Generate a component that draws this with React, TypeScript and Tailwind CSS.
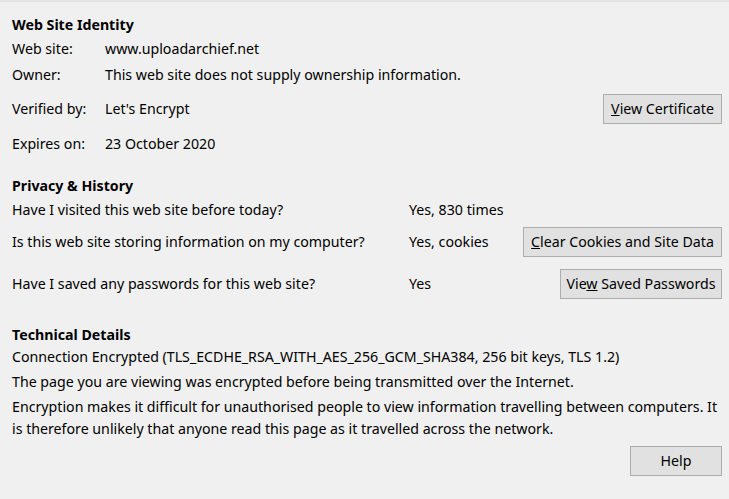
import React from "react";

function Btn({ children, className = "" }: { children: React.ReactNode; className?: string }) {
  return (
    <div
      className={`h-[30px] flex items-center justify-center bg-[#e1e1e1] border border-[#adadad] text-black ${className}`}
    >
      {children}
    </div>
  );
}

export default function App() {
  return (
    <div
      className="w-[729px] h-[499px] bg-[#f0f0f0] border-t-2 border-[#e3e3e3] text-black text-[14.2px] overflow-hidden"
      style={{ fontFamily: '"Noto Sans", sans-serif' }}
    >
      <div className="pl-[12px] pr-[7px] pt-[11px]">
        {/* Web Site Identity */}
        <div className="h-[24px] flex items-center font-bold">Web Site Identity</div>
        <div className="h-[24px] flex items-center">
          <span className="w-[93px]">Web site:</span>
          <span>www.uploadarchief.net</span>
        </div>
        <div className="mt-[2px] h-[24px] flex items-center">
          <span className="w-[93px]">Owner:</span>
          <span>This web site does not supply ownership information.</span>
        </div>
        <div className="mt-[7px] h-[30px] flex items-center">
          <span className="w-[93px]">Verified by:</span>
          <span className="flex-1">Let's Encrypt</span>
          <Btn className="w-[119px]">
            <span>
              <span className="underline">V</span>iew Certificate
            </span>
          </Btn>
        </div>
        <div className="mt-[8px] h-[24px] flex items-center">
          <span className="w-[93px]">Expires on:</span>
          <span>23 October 2020</span>
        </div>

        {/* Privacy & History */}
        <div className="mt-[18px] h-[24px] flex items-center font-bold">Privacy &amp; History</div>
        <div className="h-[24px] flex items-center">
          <span className="w-[397px]">Have I visited this web site before today?</span>
          <span>Yes, 830 times</span>
        </div>
        <div className="mt-[5px] h-[30px] flex items-center">
          <span className="w-[397px]">Is this web site storing information on my computer?</span>
          <span className="flex-1">Yes, cookies</span>
          <Btn className="w-[199px]">
            <span>
              <span className="underline">C</span>lear Cookies and Site Data
            </span>
          </Btn>
        </div>
        <div className="mt-[12px] h-[30px] flex items-center">
          <span className="w-[397px]">Have I saved any passwords for this web site?</span>
          <span className="flex-1">Yes</span>
          <Btn className="w-[162px]">
            <span>
              Vie<span className="underline">w</span> Saved Passwords
            </span>
          </Btn>
        </div>

        {/* Technical Details */}
        <div className="mt-[25px] h-[22px] flex items-center font-bold">Technical Details</div>
        <div className="h-[22px] flex items-center">
          Connection Encrypted (TLS_ECDHE_RSA_WITH_AES_256_GCM_SHA384, 256 bit keys, TLS 1.2)
        </div>
        <div className="mt-[3px] h-[22px] flex items-center">
          The page you are viewing was encrypted before being transmitted over the Internet.
        </div>
        <div className="mt-[3px] leading-[22px] whitespace-nowrap">
          Encryption makes it difficult for unauthorised people to view information travelling between computers. It
          <br />
          is therefore unlikely that anyone read this page as it travelled across the network.
        </div>
        <div className="mt-[6px] flex justify-end">
          <Btn className="w-[92px]">Help</Btn>
        </div>
      </div>
    </div>
  );
}
